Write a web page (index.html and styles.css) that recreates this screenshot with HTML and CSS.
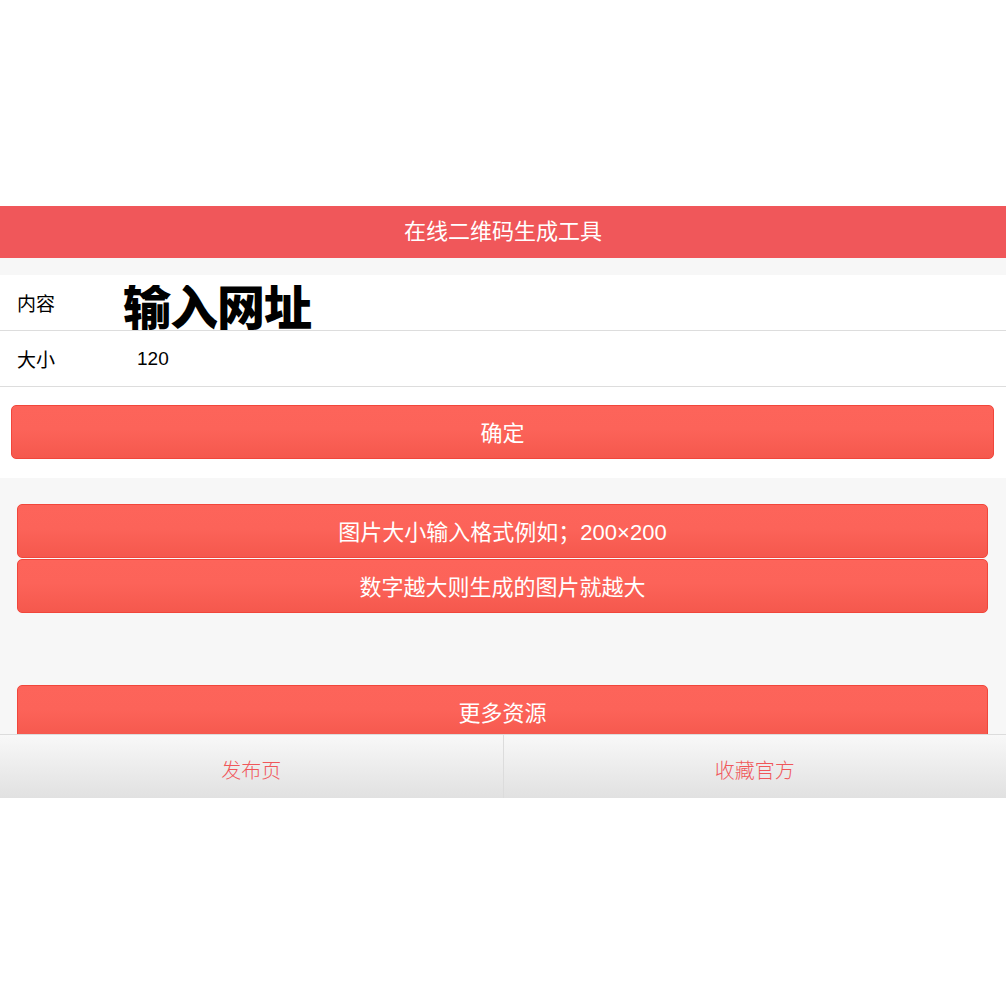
FILE: index.html
```html
<!DOCTYPE html>
<html lang="zh-CN">
<head>
<meta charset="utf-8">
<title>在线二维码生成工具</title>
<link rel="stylesheet" href="styles.css">
</head>
<body>
<div class="page">
  <header class="topbar">在线二维码生成工具</header>
  <div class="gap"></div>
  <div class="form">
    <div class="row">
      <span class="label">内容</span>
      <div class="field field-big">输入网址</div>
    </div>
    <div class="row">
      <span class="label">大小</span>
      <div class="field field-num">120</div>
    </div>
  </div>
  <div class="submit-wrap">
    <div class="btn">确定</div>
  </div>
  <div class="info">
    <div class="btn">图片大小输入格式例如；200×200</div>
    <div class="btn">数字越大则生成的图片就越大</div>
    <div class="btn btn-more">更多资源</div>
  </div>
  <footer class="footer">
    <div class="tab">发布页</div>
    <div class="tab">收藏官方</div>
  </footer>
</div>
</body>
</html>
```
FILE: styles.css
```css
html, body {
  margin: 0;
  padding: 0;
  background: #ffffff;
}
body {
  font-family: "Liberation Sans", "Noto Sans CJK SC", sans-serif;
  color: #000;
}
.page {
  padding-top: 206px;
}
.topbar {
  height: 52px;
  line-height: 52px;
  background: #f0575a;
  color: #fff;
  text-align: center;
  font-size: 22px;
}
.gap {
  height: 17px;
  background: #f7f7f7;
}
.form {
  background: #fff;
}
.row {
  height: 55px;
  border-bottom: 1px solid #dddddd;
  display: flex;
  align-items: center;
  overflow: hidden;
}
.label {
  width: 120px;
  padding-left: 17px;
  box-sizing: border-box;
  font-size: 19px;
  flex: none;
}
.field {
  flex: 1;
}
.field-big {
  font-size: 48px;
  font-weight: 900;
  padding-left: 3px;
  align-self: flex-start;
  line-height: 48px;
  margin-top: 10px;
  height: 45px;
  overflow: hidden;
  letter-spacing: -1px;
}
.field-num {
  font-size: 19px;
  padding-left: 17px;
}
.submit-wrap {
  padding: 18px 12px 19px 11px;
  background: #fff;
}
.btn {
  height: 54px;
  box-sizing: border-box;
  border: 1px solid #f1463b;
  border-radius: 5px;
  background: linear-gradient(to bottom, #fd645a 0%, #fc6359 45%, #f5584d 100%);
  color: #fff;
  font-size: 22px;
  display: flex;
  align-items: center;
  justify-content: center;
  padding-bottom: 2px;
}
.info {
  background: #f7f7f7;
  padding: 26px 18px 0 17px;
  height: 256px;
  box-sizing: border-box;
  overflow: hidden;
}
.info .btn + .btn {
  margin-top: 1px;
}
.info .btn-more {
  margin-top: 72px !important;
}
.footer {
  height: 64px;
  box-sizing: border-box;
  border-top: 1px solid #dcdcdc;
  background: linear-gradient(to bottom, #f8f8f8 0%, #e1e1e1 100%);
  display: flex;
}
.tab {
  flex: 1;
  display: flex;
  align-items: center;
  justify-content: center;
  color: #f0575a;
  font-size: 20px;
  font-weight: 300;
  padding-top: 5px;
}
.tab + .tab {
  border-left: 1px solid #dcdcdc;
}
```
